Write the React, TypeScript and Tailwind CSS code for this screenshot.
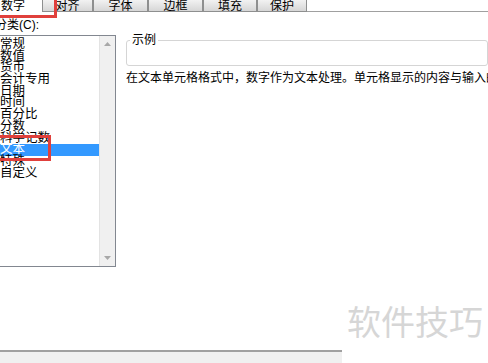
import React from "react";

const tabs = ["对齐", "字体", "边框", "填充", "保护"];
const tabWidths = ["w-[51px]", "w-[55px]", "w-[55px]", "w-[54px]", "w-[50px]"];

const categories = [
  "常规",
  "数值",
  "货币",
  "会计专用",
  "日期",
  "时间",
  "百分比",
  "分数",
  "科学记数",
  "文本",
  "特殊",
  "自定义",
];

export default function App() {
  return (
    <div
      className="relative flex h-[363px] w-[488px] flex-col overflow-hidden bg-white text-[12px] text-black"
      style={{ fontFamily: '"Liberation Sans", "Noto Sans CJK SC", sans-serif' }}
    >
      {/* tab row */}
      <div className="flex h-[12px] shrink-0 items-end">
        <div className="flex h-[12px] w-[42px] items-center bg-white pl-px leading-none">数字</div>
        {tabs.map((tab, i) => (
          <div
            key={tab}
            className={`flex h-[12px] ${tabWidths[i]} items-center justify-center border-x border-b border-[#8e8f8f] bg-gradient-to-b from-[#f2f2f2] to-[#d6d6d6] leading-none`}
          >
            {tab}
          </div>
        ))}
        <div className="h-[12px] flex-1 border-b border-[#a0a0a0]" />
      </div>

      {/* body */}
      <div className="flex flex-1">
        <div className="-ml-[1px] w-[117px] shrink-0">
          <div className="-ml-[4px] mt-[7px] leading-[12px]">分类(C):</div>
          <div className="mt-[4px] flex h-[232px] border border-[#828790] bg-white">
            <ul className="w-[99px] pt-[3px]">
              {categories.map((c) => (
                <li
                  key={c}
                  className={`h-[11.7px] whitespace-nowrap text-[12.5px] leading-[11.7px] ${
                    c === "文本" ? "bg-[#3399ff] text-white" : ""
                  }`}
                >
                  {c}
                </li>
              ))}
            </ul>
            <div className="flex flex-1 flex-col items-center justify-between border-l border-[#e3e3e3] bg-[#f0f0f0] py-[6px]">
              <svg width="7" height="4" viewBox="0 0 7 4">
                <path d="M3.5 0 L7 4 L0 4 Z" fill="#a8a8a8" />
              </svg>
              <svg width="7" height="4" viewBox="0 0 7 4">
                <path d="M0 0 L7 0 L3.5 4 Z" fill="#a8a8a8" />
              </svg>
            </div>
          </div>
        </div>

        <div className="ml-[10px] min-w-0 flex-1">
          <fieldset className="mt-[22px] h-[32px] rounded-[3px] border border-[#d5d5d5] pl-[3px]">
            <legend className="px-[2px] leading-[12px]">示例</legend>
          </fieldset>
          <p className="mt-[6px] whitespace-nowrap leading-[12px]">
            在文本单元格格式中，数字作为文本处理。单元格显示的内容与输入的内容完全一致。
          </p>
        </div>
      </div>

      {/* bottom bar */}
      <div className="h-[13px] w-[342px] shrink-0 border-t-2 border-[#a0a0a0] bg-[#f0f0f0]" />

      {/* annotations */}
      <div className="absolute -left-[3px] -top-[3px] h-[21px] w-[60px] border-[3px] border-[#e0403c]" />
      <div className="absolute -left-[3px] top-[135px] h-[26px] w-[54px] border-[3px] border-[#e0403c]" />
      <div className="absolute left-[347px] top-[306px] text-[34px] leading-none text-[#d6d6d6]">软件技巧</div>
    </div>
  );
}
